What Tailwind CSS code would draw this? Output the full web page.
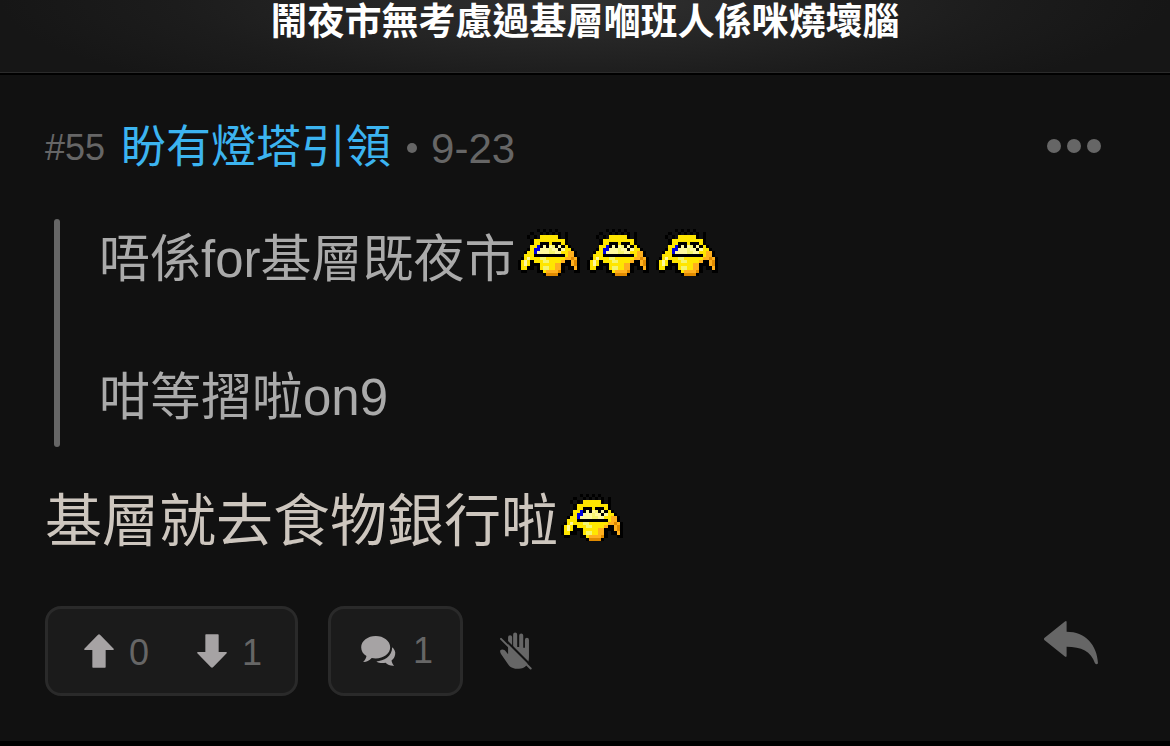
<!DOCTYPE html>
<html lang="zh-HK">
  <head>
    <meta charset="UTF-8" />
    <meta name="viewport" content="width=device-width, initial-scale=1.0" />
    <title>鬧夜市無考慮過基層嗰班人係咪燒壞腦</title>
    <script src="https://cdn.jsdelivr.net/npm/@tailwindcss/browser@4"></script>
  </head>
  <body class="min-h-screen flex flex-col bg-black font-['Liberation_Sans','Noto_Sans_CJK_TC',sans-serif] overflow-x-hidden">

    <!-- Sprite: one char = one pixel -->
    <svg class="hidden">
      <symbol id="face" viewBox="0 0 20 15" shape-rendering="crispEdges"></symbol>
    </svg>

    <!-- Thread title -->
    <header class="pt-px pb-[27px] text-center border-b border-[#2b2b2b] bg-[radial-gradient(ellipse_50%_160%_at_50%_0%,#303030_0%,#1c1c1c_70%,#161616_100%)]">
      <h1 class="text-[37px] leading-[44px] font-bold text-white">鬧夜市無考慮過基層嗰班人係咪燒壞腦</h1>
    </header>

    <!-- Reply -->
    <article class="mt-0.5 pt-9 pb-[45px] pl-[45px] pr-[69px] bg-[#111111]">
      <div class="flex items-center h-[72px] pt-0.5 text-[#666666]">
        <span class="text-[36px]">#55</span>
        <a href="#" class="ml-4 text-[45px] text-[#3cb4f0]">盼有燈塔引領</a>
        <span class="ml-4 size-[10px] rounded-full bg-[#666666]"></span>
        <time class="ml-[14px] text-[42px]">9-23</time>
        <button class="ml-auto flex gap-[6px] pb-1" aria-label="更多">
          <span class="size-[14px] rounded-full bg-[#666666]"></span>
          <span class="size-[14px] rounded-full bg-[#666666]"></span>
          <span class="size-[14px] rounded-full bg-[#666666]"></span>
        </button>
      </div>

      <blockquote class="flex mt-9 ml-[9px] text-[51px] leading-[69px] text-[#aaaaaa]">
        <div class="w-[6px] mr-[39px] rounded-full bg-[#666666]"></div>
        <div class="pt-[6px] pb-[15px]">
          <p class="flex">唔係for基層既夜市<svg class="w-[62px] h-[47px] mt-1 ml-[2px] mr-[5px]"><use href="#face" /></svg><svg class="w-[62px] h-[47px] mt-1 ml-[2px] mr-[5px]"><use href="#face" /></svg><svg class="w-[62px] h-[47px] mt-1 ml-[2px] mr-[5px]"><use href="#face" /></svg></p>
          <br />
          <p>咁等摺啦on9</p>
        </div>
      </blockquote>

      <p class="flex mt-10 text-[57px] leading-[69px] text-[#cdc6be]">基層就去食物銀行啦<svg class="w-[62px] h-[47px] mt-[7px] ml-[3px]"><use href="#face" /></svg></p>

      <div class="flex mt-[50px] h-[90px] text-[36px] text-[#666666]">
        <div class="flex gap-12 pl-9 pr-[33px] rounded-2xl border-3 border-[#2a2a2a] bg-[#1b1b1b]">
          <button class="flex items-center gap-[15px]" aria-label="正評">
            <svg class="w-[30px] h-[34px] fill-[#a6a3a4]" viewBox="0 0 90 100"><path d="M42 1Q45-1 48 1L89 43Q91 46 87 47H65V98Q65 100 63 100H27Q25 100 25 98V47H3Q-1 46 1 43Z" /></svg>
            <span class="pt-1">0</span>
          </button>
          <button class="flex items-center gap-[15px]" aria-label="負評">
            <svg class="w-[30px] h-[34px] rotate-180 fill-[#a6a3a4]" viewBox="0 0 90 100"><path d="M42 1Q45-1 48 1L89 43Q91 46 87 47H65V98Q65 100 63 100H27Q25 100 25 98V47H3Q-1 46 1 43Z" /></svg>
            <span class="pt-1">1</span>
          </button>
        </div>
        <button class="flex items-center gap-[17px] ml-[30px] pl-[30px] pr-[27px] rounded-2xl border-3 border-[#2a2a2a] bg-[#1b1b1b]" aria-label="回覆數">
          <svg class="w-[35px] h-[30px] fill-[#a6a3a4]" viewBox="0 0 105 91">
            <path d="M44 0C68 0 88 15 88 34S68 68 44 68Q37 68 32 67C24 75 14 80 6 79C12 73 15 67 16 61C5 54 0 45 0 34C0 15 20 0 44 0Z" />
            <path d="M94 34C101 40 105 48 103 56C102 64 98 70 92 74C93 81 96 86 100 90C90 91 80 87 74 81C62 83 52 81 46 77C68 76 94 62 94 34Z" />
          </svg>
          <span>1</span>
        </button>
        <button class="ml-[37px]" aria-label="封鎖">
          <svg class="w-8 h-[38px]" viewBox="0 0 95 112">
            <path fill="#666666" d="M1 54C6 49 14 52 18 58L24 66V15A6 6 0 0 1 36 15V44H39V7A6 6 0 0 1 51 7V44H57V10A6 6 0 0 1 69 10V46H74V23A6 6 0 0 1 86 23V74C86 96 74 109 56 109C40 109 31 105 24 95L3 65Q-1 58 1 54Z" />
            <path d="M6 13L95 102" fill="none" stroke="#111111" stroke-width="6" />
            <path d="M3 20L91 108" fill="none" stroke="#666666" stroke-width="6" stroke-linecap="round" />
          </svg>
        </button>
        <button class="ml-auto mr-[3px] self-start mt-[15px]" aria-label="回覆">
          <svg class="w-[54px] h-[44px] fill-[#666666]" viewBox="0 0 160 130"><path d="M1 50L62 1Q67-2 67 3V32C122 32 157 70 160 125Q156 131 151 125C140 90 110 76 67 76V103Q67 108 62 105L1 56Q-1 53 1 50Z" /></svg>
        </button>
      </div>
    </article>

    <script>
      const colors = { k: "#000000", y: "#ffe600", w: "#fff9a0", l: "#f5f56e", b: "#0000e0", o: "#ffb01e", d: "#e08a00" };
      const rows = [
        "......k.k.k.k.......",
        "....k..k.k.k.k.k....",
        "...k.k.yyyyyyk.k....",
        "....kyyyyyyyyyyk....",
        "....kyykkkykkkyk....",
        "....yybkwkwlkwkyk...",
        "...kybbwwwlwwkwyyk..",
        "..kyybwwwwllwwyyook.",
        "..yyykkkkkkkkkkyook.",
        ".kywyyyllyyyyyyoodok",
        "kywykyyyllyyyyokkodk",
        "kywykkkyyyyyookkkodk",
        "kyykk.kyllyyook.kkok",
        ".kk...kkyoooodk...kk",
        "........kddddk......",
      ];
      let rects = "";
      rows.forEach((row, y) => {
        [...row].forEach((c, x) => {
          if (c !== ".") rects += `<rect x="${x}" y="${y}" width="1" height="1" fill="${colors[c]}" />`;
        });
      });
      document.getElementById("face").innerHTML = rects;
    </script>
  </body>
</html>
